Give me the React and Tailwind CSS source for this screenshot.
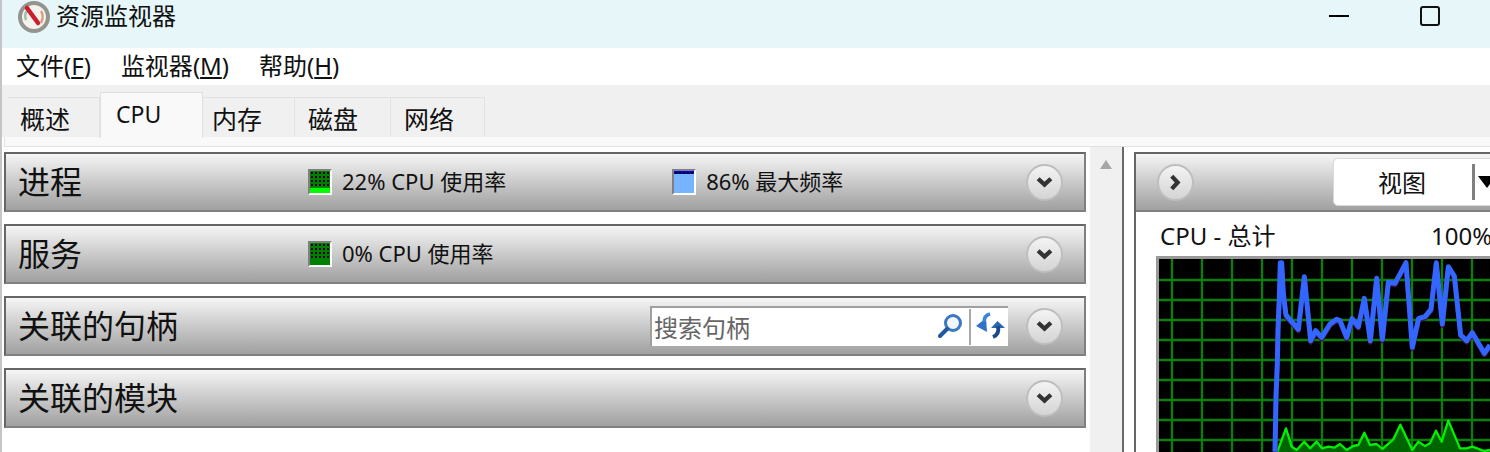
const FONT = "font-['Noto_Sans','Noto_Sans_CJK_SC',sans-serif]";

const BLUE_LINE =
  "375,605 378,440 382,340 384,240 388,140 391,38 395,38 400,130 408,195 445,238 463,80 482,272 497,242 515,262 540,222 560,208 570,212 590,262 606,206 625,230 643,145 661,272 680,85 697,268 715,97 735,100 768,38 787,292 806,205 825,200 843,178 859,38 877,222 895,50 913,78 932,255 950,272 967,248 1003,310 1020,285";
const GREEN_LINE =
  "382,605 408,535 425,590 440,600 463,575 480,595 500,575 516,595 535,590 553,593 570,582 590,600 610,588 625,585 643,548 660,585 680,582 697,597 730,568 751,524 787,600 805,575 825,588 840,580 858,542 875,575 895,512 930,595 950,595 967,590 1003,603 1020,600";
const V_LINES = [66, 156, 246, 336, 426, 516, 606, 696, 786, 876, 966];
const H_LINES = [90, 150, 210, 270, 330, 390, 450, 510, 570];

function AppIcon() {
  return (
    <svg width="32" height="32" viewBox="0 0 32 32">
      <circle cx="16" cy="16" r="14" fill="#f4f2ee" stroke="#94948e" strokeWidth="4" />
      <path d="M23 10c2 3 2 8 0 12" fill="none" stroke="#d9a27c" strokeWidth="2.5" />
      <path d="M9 10c-2 2-2 6-1 9" fill="none" stroke="#9cc0a8" strokeWidth="2.5" />
      <path d="M9 7l11 15" stroke="#c8202c" strokeWidth="4.5" strokeLinecap="round" />
    </svg>
  );
}

function RoundButton({ dir = "down", className = "" }) {
  return (
    <div
      className={`flex h-[37px] w-[37px] shrink-0 items-center justify-center rounded-full border-2 border-[#bebebe] bg-gradient-to-b from-[#f4f4f4] to-[#d4d4d4] ${className}`}
    >
      <svg width="17" height="17" viewBox="0 0 16 16">
        <path
          d={dir === "down" ? "M2 4.5l6 5.5 6-5.5" : "M4.5 2l5.5 6-5.5 6"}
          fill="none"
          stroke="#333"
          strokeWidth="4"
        />
      </svg>
    </div>
  );
}

function Swatch({ kind }) {
  const dots = [];
  const rows = kind === "blue" ? [0] : [0, 1, 2, 3];
  rows.forEach((r) => {
    for (let c = 0; c < 5; c++) {
      dots.push(<rect key={`${r}-${c}`} x={1 + c * 4} y={1 + r * 4} width="2" height="2" fill="#000" />);
    }
  });
  return (
    <div className="h-[26px] w-[24px] shrink-0 border-t-2 border-r-2 border-b-2 border-l-2 border-t-[#808080] border-r-white border-b-white border-l-[#808080]">
      <svg width="20" height="22" viewBox="0 0 20 22" className="block" shapeRendering="crispEdges">
        {kind === "blue" && (
          <>
            <rect width="20" height="22" fill="#76b4ff" />
            <rect width="20" height="3" fill="#0000e0" />
          </>
        )}
        {kind === "full" && <rect width="20" height="22" fill="#008000" />}
        {kind === "part" && (
          <>
            <rect width="20" height="17" fill="#008000" />
            <rect y="17" width="20" height="5" fill="#00ff00" />
          </>
        )}
        {dots}
      </svg>
    </div>
  );
}

function Stat({ kind, text, className }) {
  return (
    <div className={`flex items-center gap-[10px] ${className}`}>
      <Swatch kind={kind} />
      <span className="mb-[2px] text-[22px] leading-none whitespace-nowrap text-[#111]">{text}</span>
    </div>
  );
}

function SearchBox() {
  return (
    <div className="mr-[18px] ml-auto flex h-[40px] w-[358px] items-center border-t-2 border-l-2 border-t-[#a0a0a0] border-l-[#a0a0a0] bg-white">
      <span className="mt-[2px] ml-[2px] text-[24px] leading-none text-[#666]">搜索句柄</span>
      <svg width="28" height="28" viewBox="0 0 28 28" className="ml-auto">
        <circle cx="17" cy="10" r="7.5" fill="#f2f6fb" stroke="#3a78c0" strokeWidth="3" />
        <path d="M11 16L4 23" stroke="#1f5a9e" strokeWidth="4" strokeLinecap="round" />
      </svg>
      <div className="mx-[5px] h-[36px] w-[2px] bg-[#a8a8a8]" />
      <svg width="30" height="30" viewBox="0 0 30 30" className="mr-[2px]">
        <path d="M0 14l10-8 1 14z" fill="#2f72c8" />
        <path d="M8 10C8 6 10 3 14 2" fill="none" stroke="#3d86d6" strokeWidth="3.5" />
        <path d="M15 16l6.5-7 7.5 7z" fill="#2a66b4" />
        <path d="M22 14c1 5 0 9-5 11" fill="none" stroke="#1c4a8a" strokeWidth="4" />
      </svg>
    </div>
  );
}

function Panel({ title, children }) {
  return (
    <div className="flex h-[60px] items-center border-t-2 border-r-2 border-b-2 border-l-2 border-t-[#666] border-r-[#808080] border-b-[#808080] border-l-[#666] bg-gradient-to-b from-[#f6f6f6] to-[#a0a0a0] pr-[21px] pl-[12px]">
      <span className="text-[32px] leading-none whitespace-nowrap text-[#111]">{title}</span>
      {children}
    </div>
  );
}

function Chart() {
  return (
    <div className="h-[196px] w-[334px] shrink-0 border-t-[3px] border-l-[3px] border-[#999] bg-black">
      <svg width="331" height="193" viewBox="27 27 993 579" className="block" strokeLinejoin="round">
        {V_LINES.map((x) => (
          <line key={x} x1={x} x2={x} y1="27" y2="606" stroke="#0a800a" strokeWidth="7" />
        ))}
        {H_LINES.map((y) => (
          <line key={y} x1="27" x2="1020" y1={y} y2={y} stroke="#0a800a" strokeWidth="7" />
        ))}
        <polygon points={`${GREEN_LINE} 1020,606 382,606`} fill="#006400" />
        <polyline points={GREEN_LINE} fill="none" stroke="#00f000" strokeWidth="7" />
        <polyline points={BLUE_LINE} transform="translate(0 5)" fill="none" stroke="#40104a" strokeWidth="14" />
        <polyline points={BLUE_LINE} fill="none" stroke="#3366ff" strokeWidth="15" />
      </svg>
    </div>
  );
}

function Menu({ label, hot }) {
  return (
    <span className="text-[24px] leading-none whitespace-nowrap text-[#111]">
      {label}(<u>{hot}</u>)
    </span>
  );
}

function Tab({ label, width, inset, active }) {
  if (active) {
    return (
      <div
        className="relative z-10 -mb-px flex h-[46px] items-start border-x border-t border-[#e0e0e0] bg-[#f9f9f9] pt-[10px] text-[23px] leading-none"
        style={{ width, paddingLeft: inset }}
      >
        {label}
      </div>
    );
  }
  return (
    <div
      className="flex h-[40px] items-center border-t border-r border-[#e2e2e2] bg-[#f0f0f0] pt-[3px] text-[25px] leading-none"
      style={{ width, paddingLeft: inset }}
    >
      {label}
    </div>
  );
}

export default function App() {
  return (
    <div className={`h-[452px] w-[1490px] overflow-hidden border-l-2 border-[#c2c6c6] bg-white text-[#111] ${FONT}`}>
      <div className="flex h-[48px] items-start bg-[#e6f6f9] pt-[1px] pl-[16px]">
        <AppIcon />
        <span className="mt-[1px] ml-[6px] text-[24px] leading-[28px]">资源监视器</span>
        <div className="mt-[14px] ml-auto h-[2px] w-[20px] bg-black" />
        <div className="mt-[5px] mr-[50px] ml-[71px] h-[20px] w-[20px] rounded-[3px] border-2 border-[#111]" />
      </div>

      <div className="flex h-[37px] items-center gap-[30px] pb-[1px] pl-[14px]">
        <Menu label="文件" hot="F" />
        <Menu label="监视器" hot="M" />
        <Menu label="帮助" hot="H" />
      </div>

      <div className="flex h-[52px] items-end bg-[#f0f0f0] pl-[6px]">
        <Tab label="概述" width={92} inset={12} />
        <Tab label="CPU" width={103} inset={15} active />
        <Tab label="内存" width={92} inset={9} />
        <Tab label="磁盘" width={96} inset={13} />
        <Tab label="网络" width={94} inset={13} />
      </div>
      <div className="ml-[2px] h-[10px] border-b border-l border-[#e0e0e0] bg-[#f9f9f9]" />

      <div className="flex h-[305px]">
        <div className="ml-[2px] flex w-[1082px] shrink-0 flex-col gap-[12px] pt-[5px]">
          <Panel title="进程">
            <Stat kind="part" text="22% CPU 使用率" className="ml-[226px]" />
            <Stat kind="blue" text="86% 最大频率" className="ml-[166px]" />
            <RoundButton className="ml-auto" />
          </Panel>
          <Panel title="服务">
            <Stat kind="full" text="0% CPU 使用率" className="ml-[226px]" />
            <RoundButton className="ml-auto" />
          </Panel>
          <Panel title="关联的句柄">
            <SearchBox />
            <RoundButton />
          </Panel>
          <Panel title="关联的模块">
            <RoundButton className="ml-auto" />
          </Panel>
        </div>

        <div className="ml-[4px] flex w-[32px] shrink-0 justify-center bg-[#f0f0f0] pt-[13px]">
          <div className="h-0 w-0 border-x-[6px] border-b-[9px] border-x-transparent border-b-[#a6a6a6]" />
        </div>
        <div className="w-[2px] shrink-0 bg-[#696969]" />

        <div className="mt-[5px] ml-[10px] flex w-[356px] shrink-0 flex-col border-l-2 border-[#666]">
          <div className="flex h-[60px] shrink-0 items-center border-t-2 border-b-2 border-t-[#666] border-b-[#808080] bg-gradient-to-b from-[#f6f6f6] to-[#a0a0a0] pl-[21px]">
            <RoundButton dir="right" />
            <div className="ml-[139px] flex h-[48px] w-[170px] shrink-0 items-center rounded-l-[5px] border border-[#d8d8d8] bg-white">
              <span className="mt-[2px] ml-[44px] text-[24px] leading-none">视图</span>
              <div className="ml-[46px] h-[36px] w-[3px] bg-[#808080]" />
              <div className="ml-[3px] h-0 w-0 border-x-[9px] border-t-[12px] border-x-transparent border-t-black" />
            </div>
          </div>
          <div className="flex h-[44px] shrink-0 items-center pt-[4px] pl-[24px] text-[24px] leading-none whitespace-nowrap">
            <span className="w-[271px] shrink-0">CPU - 总计</span>
            <span>100%</span>
          </div>
          <div className="pl-[20px]">
            <Chart />
          </div>
        </div>
      </div>
    </div>
  );
}
